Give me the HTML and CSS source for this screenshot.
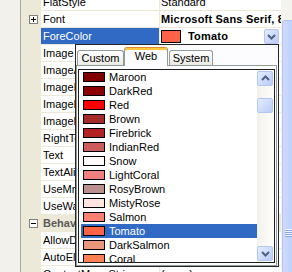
FILE: index.html
```html
<!DOCTYPE html>
<html lang="en">
<head>
    <meta charset="UTF-8">
    <title>Properties - ForeColor</title>
    <link rel="stylesheet" href="styles.css">
</head>
<body>
    <div class="frame">
        <div class="side"></div>
        <div class="grid">
            <div class="row"><div class="gutter"></div><div class="name">FlatStyle</div><div class="value">Standard</div></div>
            <div class="row">
                <div class="gutter"><svg class="toggle" width="9" height="9" viewBox="0 0 9 9"><rect x="0.5" y="0.5" width="8" height="8" fill="#fff" stroke="#808080"/><path d="M2 4.5h5M4.5 2v5" stroke="#000"/></svg></div>
                <div class="name">Font</div><div class="value bold">Microsoft Sans Serif, 8.25pt, style=Bold</div>
            </div>
            <div class="row selected">
                <div class="gutter"></div><div class="name">ForeColor</div>
                <div class="value bold">
                    <span class="swatch big" style="background:#ff6347"></span>Tomato
                    <span class="drop-btn"><svg width="13" height="13" viewBox="0 0 13 13"><path d="M3 5l3.5 3.5L10 5" fill="none" stroke="#4d6185" stroke-width="2"/></svg></span>
                </div>
            </div>
            <div class="row"><div class="gutter"></div><div class="name">Image</div><div class="value">(none)</div></div>
            <div class="row"><div class="gutter"></div><div class="name">ImageAlign</div><div class="value">MiddleCenter</div></div>
            <div class="row"><div class="gutter"></div><div class="name">ImageIndex</div><div class="value">(none)</div></div>
            <div class="row"><div class="gutter"></div><div class="name">ImageKey</div><div class="value">(none)</div></div>
            <div class="row"><div class="gutter"></div><div class="name">ImageList</div><div class="value">(none)</div></div>
            <div class="row"><div class="gutter"></div><div class="name">RightToLeft</div><div class="value">No</div></div>
            <div class="row"><div class="gutter"></div><div class="name">Text</div><div class="value">label1</div></div>
            <div class="row"><div class="gutter"></div><div class="name">TextAlign</div><div class="value">TopLeft</div></div>
            <div class="row"><div class="gutter"></div><div class="name">UseMnemonic</div><div class="value">True</div></div>
            <div class="row"><div class="gutter"></div><div class="name">UseWaitCursor</div><div class="value">False</div></div>
            <div class="row category">
                <div class="gutter"><svg class="toggle" width="9" height="9" viewBox="0 0 9 9"><rect x="0.5" y="0.5" width="8" height="8" fill="#fff" stroke="#808080"/><path d="M2 4.5h5" stroke="#000"/></svg></div>
                <div class="name">Behavior</div>
            </div>
            <div class="row"><div class="gutter"></div><div class="name">AllowDrop</div><div class="value">False</div></div>
            <div class="row"><div class="gutter"></div><div class="name">AutoEllipsis</div><div class="value">False</div></div>
            <div class="row"><div class="gutter"></div><div class="name">ContextMenuStrip</div><div class="value">(none)</div></div>
        </div>
        <div class="vscroll"><div class="thumb"><span class="grip"></span></div></div>

        <div class="popup">
            <div class="tabs">
                <div class="tab tab-custom">Custom</div>
                <div class="tab tab-web active">Web</div>
                <div class="tab tab-system">System</div>
            </div>
            <div class="panel">
                <div class="listbox">
                    <div class="items">
                        <div class="item"><span class="swatch" style="background:#800000"></span>Maroon</div>
                        <div class="item"><span class="swatch" style="background:#8b0000"></span>DarkRed</div>
                        <div class="item"><span class="swatch" style="background:#ff0000"></span>Red</div>
                        <div class="item"><span class="swatch" style="background:#a52a2a"></span>Brown</div>
                        <div class="item"><span class="swatch" style="background:#b22222"></span>Firebrick</div>
                        <div class="item"><span class="swatch" style="background:#cd5c5c"></span>IndianRed</div>
                        <div class="item"><span class="swatch" style="background:#fffafa"></span>Snow</div>
                        <div class="item"><span class="swatch" style="background:#f08080"></span>LightCoral</div>
                        <div class="item"><span class="swatch" style="background:#bc8f8f"></span>RosyBrown</div>
                        <div class="item"><span class="swatch" style="background:#ffe4e1"></span>MistyRose</div>
                        <div class="item"><span class="swatch" style="background:#fa8072"></span>Salmon</div>
                        <div class="item sel"><span class="swatch" style="background:#ff6347"></span>Tomato</div>
                        <div class="item"><span class="swatch" style="background:#e9967a"></span>DarkSalmon</div>
                        <div class="item"><span class="swatch" style="background:#ff7f50"></span>Coral</div>
                    </div>
                    <div class="scrollbar">
                        <span class="sb-btn"><svg width="13" height="13" viewBox="0 0 13 13"><path d="M3 8l3.5-3.5L10 8" fill="none" stroke="#4d6185" stroke-width="2"/></svg></span>
                        <span class="sb-thumb"></span>
                        <span class="sb-btn down"><svg width="13" height="13" viewBox="0 0 13 13"><path d="M3 5l3.5 3.5L10 5" fill="none" stroke="#4d6185" stroke-width="2"/></svg></span>
                    </div>
                </div>
            </div>
        </div>
    </div>
</body>
</html>
```

FILE: styles.css
```css
* { box-sizing: border-box; }
body {
    margin: 0;
    font: 11px "Liberation Sans", Arial, sans-serif;
    color: #000;
    background: #fff;
}
.frame { position: relative; display: flex; width: 292px; height: 272px; overflow: hidden; background: #fff; }
.side { flex: none; width: 21px; background: #f2f1eb; border-right: 1px solid #a9a8a2; }

/* property grid */
.grid { flex: none; width: 260px; margin-top: -6px; }
.row { display: flex; height: 17px; line-height: 16px; border-bottom: 1px solid #ece9d8; white-space: nowrap; }
.gutter { flex: none; width: 20px; padding-left: 8px; background: #ece9d8; display: flex; align-items: center; }
.name { flex: none; width: 119px; padding-left: 2px; border-right: 1px solid #ece9d8; overflow: hidden; }
.value { flex: 1; min-width: 0; padding-left: 1px; padding-right: 3px; overflow: hidden; display: flex; align-items: center; }
.bold { font-weight: bold; letter-spacing: 0.2px; }
.selected .name { background: #316ac5; color: #fff; }
.category { background: #ece9d8; }
.category .name { flex: 1; border-right: none; font-weight: bold; color: #5a5a5a; }

.swatch { flex: none; display: inline-block; width: 22px; height: 10px; border: 1px solid #000; margin-right: 4px; }
.swatch.big { width: 20px; height: 13px; margin-right: 7px; }
.drop-btn {
    margin-left: auto; margin-right: -1px;
    width: 15px; height: 15px;
    display: flex; align-items: center; justify-content: center;
    border: 1px solid #b4c6f1; border-radius: 2px;
    background: linear-gradient(135deg, #e3ebfe, #bacdf8);
}

.vscroll { flex: none; width: 11px; padding-top: 20px; background: #f4f3ee; }
.thumb {
    position: relative; height: 420px; margin-left: 1px;
    border: 1px solid #b2c5f2; border-right: none; border-radius: 3px 0 0 0;
    background: linear-gradient(to right, #cddbfd, #bfd1fa);
}
.grip { position: absolute; top: 208px; left: 2px; width: 7px; height: 8px; background: repeating-linear-gradient(#eef3fe 0 1px, #8da7e1 1px 2px); }

/* colour drop-down */
.popup {
    position: absolute; left: 75px; top: 44px;
    width: 204px; height: 223px;
    padding-right: 1px;
    border: 1px solid #262626;
    background: #fcfcfe;
    display: flex; flex-direction: column;
}
.tabs { flex: none; display: flex; align-items: flex-end; height: 20px; padding-left: 1px; position: relative; z-index: 1; }
.tab {
    height: 15px; line-height: 14px; text-align: center;
    border: 1px solid #919b9c; border-bottom: none; border-radius: 3px 3px 0 0;
    background: linear-gradient(#fff, #ebeae4);
}
.tab-custom { width: 47px; }
.tab-web { width: 44px; margin-right: 1px; }
.tab-system { width: 44px; }
.tab.active {
    height: 19px; line-height: 16px; margin-bottom: -1px;
    border-top-color: #e68b2c;
    background: #fcfcfe;
    box-shadow: inset 0 2px #ffc83c;
}
.panel { flex: 1; border: 1px solid #919b9c; padding: 3px 1px 2px; background: #fcfcfe; }
.listbox { display: flex; height: 194px; border: 1px solid #1e1e1e; background: #fff; }
.items { flex: 1; padding-left: 2px; overflow: hidden; }
.item { display: flex; align-items: center; height: 14px; padding-left: 2px; white-space: nowrap; }
.item.sel { background: #316ac5; color: #fff; }

.scrollbar { flex: none; width: 17px; display: flex; flex-direction: column; padding: 1px 1px 1px 0; background: linear-gradient(to right, #f3f1ec, #fefefb); }
.sb-btn, .sb-thumb {
    display: flex; align-items: center; justify-content: center;
    height: 15px;
    border: 1px solid #b4c6f1; border-radius: 2px;
    background: linear-gradient(135deg, #e3ebfe, #bacdf8);
}
.sb-thumb { margin-top: 12px; height: 15px; }
.sb-btn.down { margin-top: auto; }
```
